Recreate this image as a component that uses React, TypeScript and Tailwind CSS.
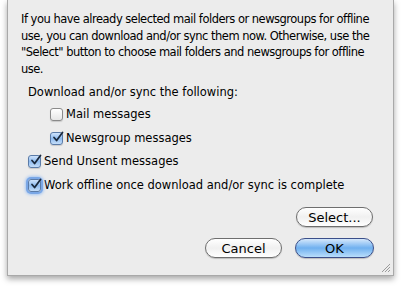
import { useState } from 'react'

function Check({ checked, focused }: { checked: boolean; focused?: boolean }) {
  return (
    <span
      className={`relative inline-flex w-[13px] h-[13px] shrink-0 items-center justify-center rounded-[3px] border ${
        checked
          ? 'border-[#5a7ba8] bg-gradient-to-b from-[#cfe3fb] via-[#8fbcf0] to-[#c4ddf8]'
          : 'border-[#8a8a8a] bg-gradient-to-b from-[#ffffff] to-[#e6e6e6]'
      } ${focused ? 'shadow-[0_0_0_2px_#7aa7e6,0_0_3px_3px_#a7c7f2]' : 'shadow-[0_1px_1px_rgba(0,0,0,0.15)]'}`}
    >
      {checked ? (
        <svg width="12" height="12" viewBox="0 0 12 12" className="absolute -top-[2px] left-[1px]">
          <path d="M2 6.5 L4.6 9.5 L10.5 1.5" fill="none" stroke="#1b2a3d" strokeWidth="1.8" strokeLinecap="round" strokeLinejoin="round" />
        </svg>
      ) : null}
    </span>
  )
}

function Row({ label, checked, focused, onToggle }: { label: string; checked: boolean; focused?: boolean; onToggle: () => void }) {
  return (
    <label className="flex items-center gap-[3px] h-[17px] cursor-default whitespace-nowrap" onClick={onToggle}>
      <Check checked={checked} focused={focused} />
      <span>{label}</span>
    </label>
  )
}

function PillButton({ label, primary, className }: { label: string; primary?: boolean; className?: string }) {
  return (
    <button
      className={`h-[20px] rounded-full border text-[13px] leading-none ${
        primary
          ? 'border-[#3b4f8a] bg-gradient-to-b from-[#d5e8fb] via-[#6fb0ef] to-[#b9defb] text-black'
          : 'border-[#6e6e6e] bg-gradient-to-b from-[#ffffff] via-[#f0f0f0] to-[#ffffff] text-black'
      } shadow-[0_1px_1px_rgba(0,0,0,0.2)] ${className ?? ''}`}
    >
      {label}
    </button>
  )
}

export default function App() {
  const [mail, setMail] = useState(false)
  const [news, setNews] = useState(true)
  const [unsent, setUnsent] = useState(true)
  const [offline, setOffline] = useState(true)

  return (
    <div className="w-[401px] h-[286px] bg-white overflow-hidden" style={{ fontFamily: '"Lucida Grande", "DejaVu Sans", sans-serif' }}>
      <div className="relative ml-[7px] w-[387px] h-[276px] bg-[#ececec] border-x border-b border-[#a9a9a9] shadow-[0_3px_6px_rgba(0,0,0,0.35)] text-[11.5px] text-black">
        <div className="pt-[11px] pl-[13px] leading-[16.5px] whitespace-nowrap tracking-[-0.5px]">
          <p>
            If you have already selected mail folders or newsgroups for offline
            <br />
            use, you can download and/or sync them now. Otherwise, use the
            <br />
            "Select" button to choose mail folders and newsgroups for offline
            <br />
            use.
          </p>
        </div>

        <div className="mt-[7px] pl-[20px]">
          <p className="h-[17px] leading-[17px]">Download and/or sync the following:</p>
          <div className="mt-[5px] pl-[22px] flex flex-col gap-[7px]">
            <Row label="Mail messages" checked={mail} onToggle={() => setMail(!mail)} />
            <Row label="Newsgroup messages" checked={news} onToggle={() => setNews(!news)} />
          </div>
          <div className="mt-[6px] flex flex-col gap-[7px]">
            <Row label="Send Unsent messages" checked={unsent} onToggle={() => setUnsent(!unsent)} />
            <Row label="Work offline once download and/or sync is complete" checked={offline} focused onToggle={() => setOffline(!offline)} />
          </div>
        </div>

        <div className="mt-[13px] pr-[20px] flex justify-end">
          <PillButton label="Select..." className="w-[77px] h-[18px]" />
        </div>
        <div className="mt-[11px] pr-[19px] flex justify-end gap-[13px]">
          <PillButton label="Cancel" className="w-[77px]" />
          <PillButton label="OK" primary className="w-[79px]" />
        </div>

        <svg width="12" height="12" viewBox="0 0 12 12" className="absolute right-[2px] bottom-[2px]">
          <path d="M11 3 L3 11 M11 6 L6 11 M11 9 L9 11" stroke="#9a9a9a" strokeWidth="1" />
        </svg>
      </div>
    </div>
  )
}
